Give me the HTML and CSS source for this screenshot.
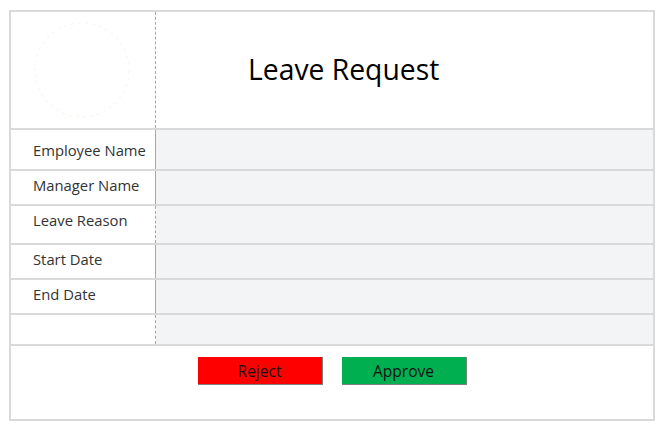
FILE: index.html
```html
<!DOCTYPE html>
<html lang="en">
<head>
    <meta charset="UTF-8">
    <meta name="viewport" content="width=device-width, initial-scale=1.0">
    <title>Leave Request</title>
    <link rel="stylesheet" href="styles.css">
</head>
<body>
    <div class="form">
        <div class="form-header">
            <div class="logo-cell">
                <svg class="logo" width="100" height="100" viewBox="0 0 100 100">
                    <ellipse cx="50" cy="50" rx="47" ry="47" fill="none" stroke="#f9f9f1" stroke-width="1.5" stroke-dasharray="3 4"/>
                </svg>
            </div>
            <div class="title-cell">
                <h1>Leave Request</h1>
            </div>
        </div>

        <div class="row row-first">
            <div class="label">Employee Name</div>
            <div class="value"></div>
        </div>
        <div class="row row-manager">
            <div class="label">Manager Name</div>
            <div class="value"></div>
        </div>
        <div class="row row-reason">
            <div class="label dashed">Leave Reason</div>
            <div class="value"></div>
        </div>
        <div class="row row-start">
            <div class="label">Start Date</div>
            <div class="value"></div>
        </div>
        <div class="row row-end">
            <div class="label">End Date</div>
            <div class="value"></div>
        </div>
        <div class="row row-empty">
            <div class="label dashed"></div>
            <div class="value"></div>
        </div>

        <div class="actions">
            <button class="btn btn-reject">Reject</button>
            <button class="btn btn-approve">Approve</button>
        </div>
    </div>
</body>
</html>
```

FILE: styles.css
```css
body {
    font-family: "Open Sans", "Noto Sans", sans-serif;
    margin: 0;
    background: white;
}

.form {
    width: 642px;
    margin: 10px 0 0 9px;
    border: 2px solid #d9d9d9;
    background: white;
}

.form-header {
    display: flex;
    height: 116px;
    border-bottom: 2px solid #d9d9d9;
}

.logo-cell {
    width: 145px;
    border-right: 1px dashed #a6a6a6;
    display: flex;
    align-items: center;
    padding-left: 21px;
    box-sizing: border-box;
}

.title-cell {
    flex: 1;
    padding: 38px 0 0 92px;
}

.title-cell h1 {
    margin: 0;
    font-size: 28.3px;
    font-weight: normal;
    line-height: 38px;
    color: #000;
}

.row {
    display: flex;
    border-bottom: 2px solid #d9d9d9;
}

.row-first { height: 39px; }
.row-manager { height: 33px; }
.row-reason { height: 37px; }
.row-start { height: 33px; }
.row-end { height: 33px; }
.row-empty { height: 29px; }

.label {
    width: 145px;
    box-sizing: border-box;
    border-right: 1px solid #a6a6a6;
    padding: 4px 0 0 22px;
    font-size: 14.8px;
    line-height: 20px;
    color: #333;
}

.row-first .label {
    padding-top: 10px;
}

.label.dashed {
    border-right-style: dashed;
}

.value {
    flex: 1;
    background: #f3f4f6;
}

.actions {
    display: flex;
    justify-content: center;
    gap: 19px;
    height: 73px;
    padding-top: 11px;
    box-sizing: border-box;
}

.btn {
    width: 125px;
    height: 28px;
    border: none;
    border-right: 1px solid #7f7f7f;
    border-bottom: 1px solid #7f7f7f;
    font-family: "Open Sans", "Noto Sans", sans-serif;
    font-size: 15.5px;
    color: #111;
    padding: 0;
    cursor: pointer;
}

.btn-reject {
    background: #ff0000;
}

.btn-approve {
    background: #00b050;
}
```
